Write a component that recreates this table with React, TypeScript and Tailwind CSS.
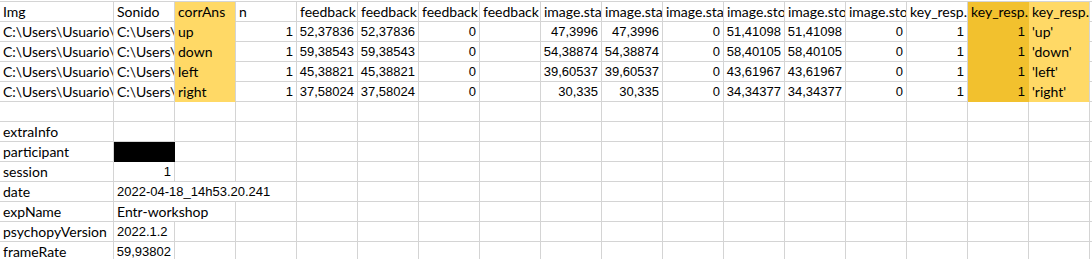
import React from "react";

type Cell = {
  v?: string;
  right?: boolean;
  fill?: "yellow" | "gold" | "black";
  span?: number;
};

const L = (v: string): Cell => ({ v });
const R = (v: string): Cell => ({ v, right: true });
const E: Cell = {};

// 17 visible columns + one sliver at the right edge
const COLS = 18;

// only the part of each header that the narrow column shows
const header = [
  "Img", "Sonido", "corrAns", "n", "feedback", "feedback", "feedback", "feedback",
  "image.sta", "image.sta", "image.sta", "image.sto", "image.sto",
  "image.sto", "key_resp.", "key_resp.", "key_resp.",
];

const trials = [
  ["up", "52,37836", "47,3996", "51,41098", "'up'"],
  ["down", "59,38543", "54,38874", "58,40105", "'down'"],
  ["left", "45,38821", "39,60537", "43,61967", "'left'"],
  ["right", "37,58024", "30,335", "34,34377", "'right'"],
];

function withFills(row: Cell[], rowIdx: number): Cell[] {
  if (rowIdx > 4) return row;
  return row.map((c, i) => {
    if (i === 2 || i === 16) return { ...c, fill: "yellow" };
    if (i === 15) return { ...c, fill: "gold" };
    return c;
  });
}

const rows: Cell[][] = [
  [...header.map(L), E],
  ...trials.map(([ans, fb, st, sp, key]) => [
    L("C:\\Users\\Usuario\\"),
    L("C:\\Users\\"),
    L(ans),
    R("1"),
    R(fb),
    R(fb),
    R("0"),
    E,
    R(st),
    R(st),
    R("0"),
    R(sp),
    R(sp),
    R("0"),
    R("1"),
    R("1"),
    L(key),
    E,
  ]),
  [],
  [L("extraInfo")],
  [L("participant"), { fill: "black" }],
  [L("session"), R("1")],
  [L("date"), { v: "2022-04-18_14h53.20.241", span: 3 }],
  [L("expName"), { v: "Entr-workshop", span: 2 }],
  [L("psychopyVersion"), L("2022.1.2")],
  [L("frameRate"), R("59,93802")],
].map((r, i) => withFills(r as Cell[], i));

function padRow(row: Cell[]): Cell[] {
  const used = row.reduce((n, c) => n + (c.span ?? 1), 0);
  return [...row, ...Array.from({ length: Math.max(0, COLS - used) }, () => E)];
}

function SheetCell({ cell }: { cell: Cell }) {
  const fill =
    cell.fill === "yellow"
      ? "bg-[#ffd966] border-b-[#ffd966]"
      : cell.fill === "gold"
        ? "bg-[#f2c12e] border-b-[#f2c12e] border-r-[#f2c12e]"
        : cell.fill === "black"
          ? "bg-black border-black"
          : "bg-white";
  const span = cell.span === 3 ? "col-span-3" : cell.span === 2 ? "col-span-2" : "";
  // digits in Calibri are narrow; Liberation Sans gets closer than Lato there
  const numeric = cell.v && /\d/.test(cell.v);
  const font = numeric
    ? "font-['Liberation_Sans'] text-[13px]"
    : "font-['Lato'] text-[14px]";
  return (
    <div
      className={`h-5 overflow-hidden whitespace-nowrap border-r border-b border-[#d4d4d4] pt-px leading-[18px] text-black ${font} ${
        cell.right ? "pr-[3px] text-right" : "pl-[3px] text-left"
      } ${fill} ${span}`}
    >
      {cell.v}
    </div>
  );
}

export default function App() {
  return (
    <div className="h-[259px] w-[1092px] overflow-hidden bg-white pt-px">
      <div className="grid grid-cols-[114px_repeat(17,61px)] border-t border-[#d4d4d4]">
        {rows.map((row, r) =>
          padRow(row).map((cell, c) => <SheetCell key={`${r}-${c}`} cell={cell} />),
        )}
      </div>
    </div>
  );
}
